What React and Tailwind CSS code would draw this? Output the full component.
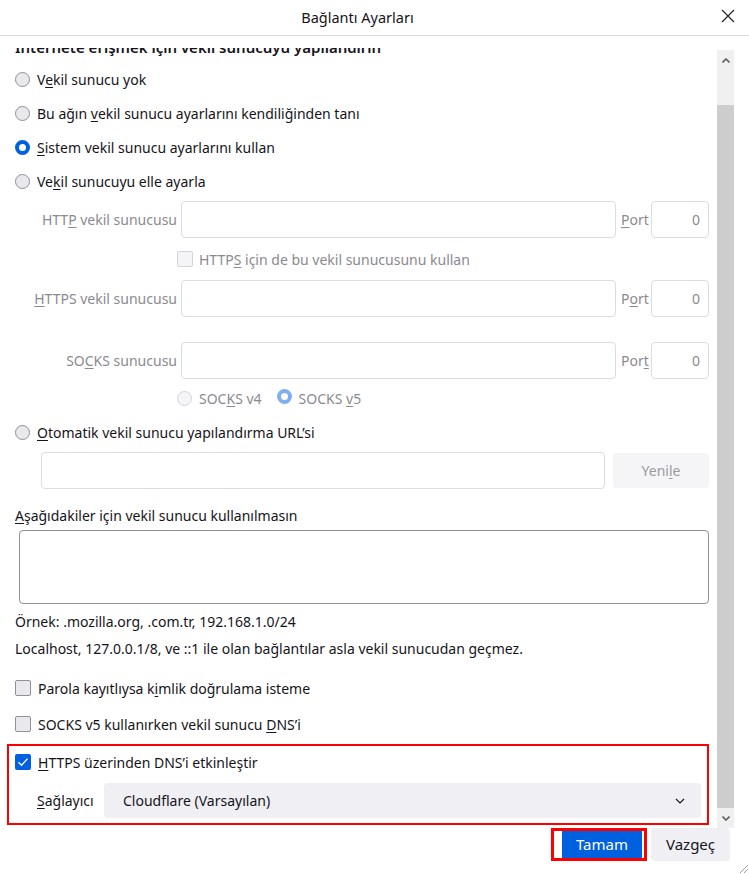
import React from 'react';

const font = { fontFamily: '"Noto Sans", "Open Sans", sans-serif' };

const Radio = ({ checked, disabled }) => {
  if (checked) {
    return (
      <span
        className={`inline-block w-[15px] h-[15px] rounded-full bg-white border-[4px] shrink-0 ${
          disabled ? 'border-[#80aef0]' : 'border-[#0061e0]'
        }`}
      />
    );
  }
  return (
    <span
      className={`inline-block w-[15px] h-[15px] rounded-full shrink-0 border ${
        disabled ? 'border-[#d4d4d8] bg-[#f5f5f7]' : 'border-[#8f8f9d] bg-[#e9e9ed]'
      }`}
    />
  );
};

const Check = ({ checked, disabled }) => {
  if (checked) {
    return (
      <span className="inline-flex items-center justify-center w-[16px] h-[16px] rounded-[2px] bg-[#0061e0] shrink-0">
        <svg width="12" height="12" viewBox="0 0 12 12" fill="none">
          <path d="M1.5 6.2 L4.6 9.3 L10.5 2.6" stroke="white" strokeWidth="1.3" />
        </svg>
      </span>
    );
  }
  return (
    <span
      className={`inline-block w-[16px] h-[16px] rounded-[2px] shrink-0 border ${
        disabled ? 'border-[#d4d4d8] bg-[#f5f5f7]' : 'border-[#8f8f9d] bg-[#e9e9ed]'
      }`}
    />
  );
};

const ProxyRow = ({ label, port, className }) => (
  <div className={`flex items-center h-[37px] text-[#8a8a90] ${className}`}>
    <div className="w-[166px] text-right pr-[4px]">{label}</div>
    <div className="w-[435px] h-full border border-[#dcdce2] rounded-[4px]" />
    <div className="w-[35px] pl-[5px]">{port}</div>
    <div className="w-[58px] h-full border border-[#dcdce2] rounded-[4px] flex items-center justify-end pr-[8px]">0</div>
  </div>
);

export default function App() {
  return (
    <div className="w-[749px] h-[874px] bg-white text-[#15141a] text-[14px] flex flex-col overflow-hidden" style={font}>
      {/* title bar */}
      <div className="relative h-[36px] shrink-0 border-b border-[#d8d8d8] flex items-center justify-center pr-[34px]">
        <span className="text-[14.5px]">Bağlantı Ayarları</span>
        <svg className="absolute right-[13px] top-[8px]" width="16" height="16" viewBox="0 0 16 16">
          <path d="M2 2 L14 14 M14 2 L2 14" stroke="#222" strokeWidth="1.2" />
        </svg>
      </div>

      <div className="h-[12px] shrink-0" />

      {/* scroll area */}
      <div className="flex h-[780px] shrink-0">
        <div className="w-[717px] overflow-hidden pl-[15px] flex flex-col">
          {/* heading scrolled mostly out of view */}
          <div className="h-[9px] overflow-hidden shrink-0">
            <div className="mt-[-11px] font-semibold text-[15px] leading-[20px] whitespace-nowrap">
              İnternete erişmek için vekil sunucuyu yapılandırın
            </div>
          </div>

          <div className="flex items-center gap-[7px] h-[20px] mt-[12px]">
            <Radio />
            <span>V<u className="underline-offset-2">e</u>kil sunucu yok</span>
          </div>
          <div className="flex items-center gap-[7px] h-[20px] mt-[14px]">
            <Radio />
            <span>Bu ağın <u className="underline-offset-2">v</u>ekil sunucu ayarlarını kendiliğinden tanı</span>
          </div>
          <div className="flex items-center gap-[7px] h-[20px] mt-[14px]">
            <Radio checked />
            <span><u className="underline-offset-2">S</u>istem vekil sunucu ayarlarını kullan</span>
          </div>
          <div className="flex items-center gap-[7px] h-[20px] mt-[14px]">
            <Radio />
            <span>Ve<u className="underline-offset-2">k</u>il sunucuyu elle ayarla</span>
          </div>

          <ProxyRow
            className="mt-[10px]"
            label={<>HTT<u className="underline-offset-2">P</u> vekil sunucusu</>}
            port={<><u className="underline-offset-2">P</u>ort</>}
          />

          <div className="flex items-center gap-[6px] h-[20px] mt-[11px] pl-[162px] text-[#8a8a90]">
            <Check disabled />
            <span>HTTP<u className="underline-offset-2">S</u> için de bu vekil sunucusunu kullan</span>
          </div>

          <ProxyRow
            className="mt-[11px]"
            label={<><u className="underline-offset-2">H</u>TTPS vekil sunucusu</>}
            port={<>P<u className="underline-offset-2">o</u>rt</>}
          />

          <ProxyRow
            className="mt-[25px]"
            label={<>SO<u className="underline-offset-2">C</u>KS sunucusu</>}
            port={<>Por<u className="underline-offset-2">t</u></>}
          />

          <div className="flex items-center h-[20px] mt-[9px] pl-[162px] text-[#8a8a90]">
            <Radio disabled />
            <span className="ml-[7px]">SOC<u className="underline-offset-2">K</u>S v4</span>
            <span className="ml-[15px]"><Radio checked disabled /></span>
            <span className="ml-[7px]">SOCKS <u className="underline-offset-2">v</u>5</span>
          </div>

          <div className="flex items-center gap-[7px] h-[20px] mt-[14px]">
            <Radio />
            <span><u className="underline-offset-2">O</u>tomatik vekil sunucu yapılandırma URL’si</span>
          </div>

          <div className="flex items-center h-[37px] mt-[10px] pl-[26px]">
            <div className="w-[564px] h-full border border-[#dcdce2] rounded-[4px]" />
            <div className="ml-[8px] w-[96px] h-[35px] rounded-[4px] bg-[#f5f5f7] text-[#9a9aa0] flex items-center justify-center">
              <span>Yeni<u className="underline-offset-2">l</u>e</span>
            </div>
          </div>

          <div className="h-[20px] mt-[16px] flex items-center">
            <span><u className="underline-offset-2">A</u>şağıdakiler için vekil sunucu kullanılmasın</span>
          </div>
          <div className="ml-[4px] w-[690px] h-[74px] mt-[5px] border border-[#8f8f9d] rounded-[4px]" />

          <div className="h-[20px] mt-[7px] flex items-center">Örnek: .mozilla.org, .com.tr, 192.168.1.0/24</div>
          <div className="h-[20px] mt-[7px] flex items-center">
            Localhost, 127.0.0.1/8, ve ::1 ile olan bağlantılar asla vekil sunucudan geçmez.
          </div>

          <div className="flex items-center gap-[7px] h-[20px] mt-[20px]">
            <Check />
            <span>Parola kayıtlıysa k<u className="underline-offset-2">i</u>mlik doğrulama isteme</span>
          </div>
          <div className="flex items-center gap-[7px] h-[20px] mt-[16px]">
            <Check />
            <span>SOCKS v5 kullanırken vekil sunucu <u className="underline-offset-2">D</u>NS’i</span>
          </div>

          {/* highlighted DoH section */}
          <div className="ml-[-8px] w-[702px] mt-[10px] border-2 border-[#ff0000] pl-[6px] pr-[6px] pt-[6px] pb-[5px] flex flex-col">
            <div className="flex items-center gap-[7px] h-[20px]">
              <Check checked />
              <span><u className="underline-offset-2">H</u>TTPS üzerinden DNS’i etkinleştir</span>
            </div>
            <div className="flex items-center mt-[11px] h-[35px]">
              <span className="pl-[22px] w-[89px]">
                <u className="underline-offset-2">S</u>ağlayıcı
              </span>
              <div className="flex-1 h-full bg-[#f0f0f4] rounded-[4px] flex items-center justify-between pl-[19px] pr-[16px]">
                <span>Cloudflare (Varsayılan)</span>
                <svg width="10" height="6" viewBox="0 0 10 6" fill="none">
                  <path d="M1 1 L5 5 L9 1" stroke="#15141a" strokeWidth="1.1" />
                </svg>
              </div>
            </div>
          </div>
        </div>

        {/* scrollbar */}
        <div className="w-[17px] mt-[2px] bg-[#f0f0f0] flex flex-col">
          <div className="h-[20px] flex items-center justify-center">
            <svg width="8" height="5" viewBox="0 0 8 5">
              <path d="M0.5 4.5 L4 1 L7.5 4.5" stroke="#606060" strokeWidth="1.6" fill="none" />
            </svg>
          </div>
          <div className="h-[35px]" />
          <div className="flex-1 bg-[#cdcdcd]" />
          <div className="h-[20px] flex items-center justify-center">
            <svg width="8" height="5" viewBox="0 0 8 5">
              <path d="M0.5 0.5 L4 4 L7.5 0.5" stroke="#606060" strokeWidth="1.6" fill="none" />
            </svg>
          </div>
        </div>
      </div>

      {/* footer */}
      <div className="relative flex-1 flex justify-end items-start gap-[9px] pr-[19px]">
        <div className="relative">
          <button className="w-[80px] h-[33px] rounded-[4px] bg-[#0061e0] text-white text-[15px]">Tamam</button>
          <div className="absolute left-[-11px] right-[-5px] top-0 bottom-0 border-[3px] border-[#ff0000] pointer-events-none" />
        </div>
        <button className="w-[79px] h-[33px] rounded-[4px] bg-[#f0f0f4] text-[15px]">Vazgeç</button>
        <svg className="absolute right-0 bottom-0" width="12" height="12" viewBox="0 0 12 12">
          <path d="M11 3 L3 11 M11 7 L7 11" stroke="#a0a0a0" strokeWidth="1" />
        </svg>
      </div>
    </div>
  );
}
